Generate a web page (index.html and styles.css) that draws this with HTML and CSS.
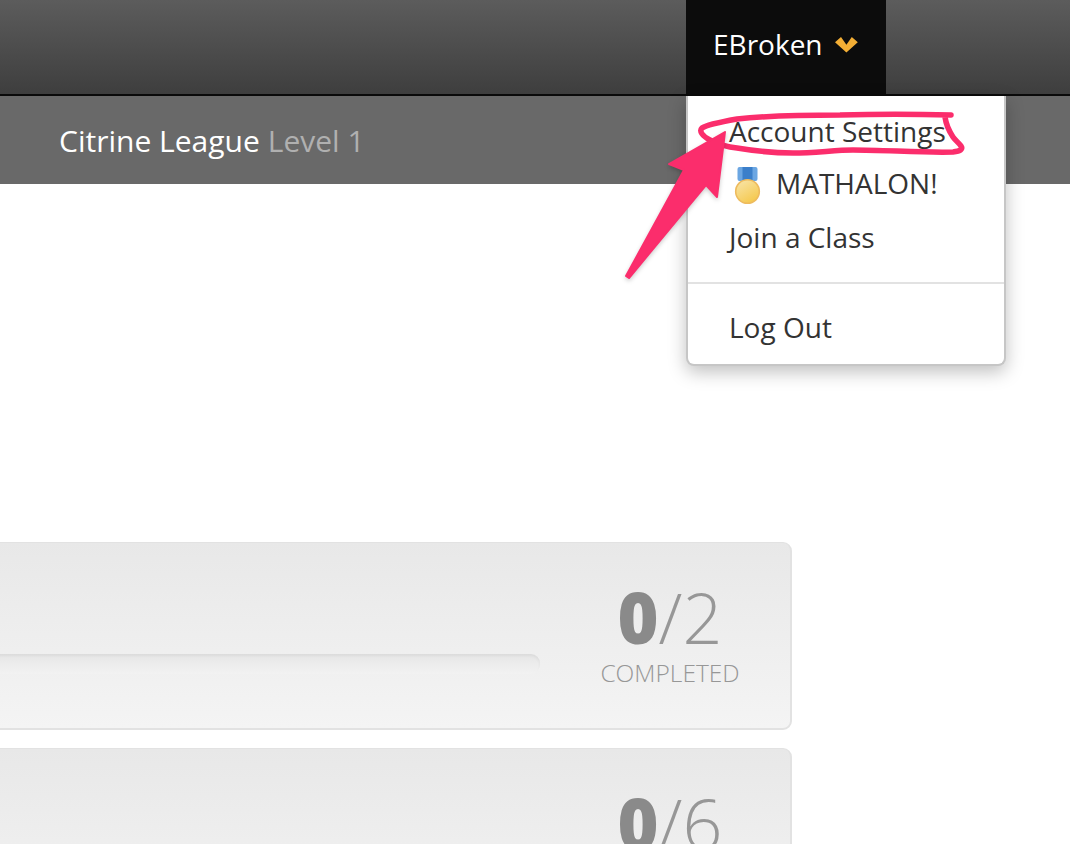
FILE: index.html
```html
<!DOCTYPE html>
<html lang="en">
<head>
    <meta charset="UTF-8">
    <meta name="viewport" content="width=device-width, initial-scale=1.0">
    <title>Dashboard</title>
    <link rel="stylesheet" href="styles.css">
</head>
<body>
    <header class="topbar">
        <div class="user-menu">
            <span class="user-name">EBroken</span>
            <svg class="chevron" width="23" height="16" viewBox="0 0 23 16">
                <path d="M0 5.3 L6 0 L11.4 7.7 L16.8 0 L22.8 5.3 L11.4 15.6 Z" fill="#f3ae35"/>
            </svg>
        </div>
    </header>
    <div class="subbar">
        <span class="league">Citrine League</span>
        <span class="level">Level 1</span>
    </div>

    <div class="dropdown">
        <a class="dropdown-item item-account">Account Settings</a>
        <a class="dropdown-item item-mathalon">
            <svg class="medal" width="28" height="38" viewBox="0 0 28 38">
                <defs>
                    <linearGradient id="gold" x1="0" y1="0" x2="0.6" y2="1">
                        <stop offset="0" stop-color="#f8e6ae"/>
                        <stop offset="1" stop-color="#f5c94f"/>
                    </linearGradient>
                </defs>
                <rect x="3.5" y="0" width="20" height="14" rx="2" fill="#6ba6e2"/>
                <rect x="8.5" y="0" width="10" height="14" fill="#3b7fca"/>
                <circle cx="13.5" cy="24.5" r="11.8" fill="url(#gold)" stroke="#eebb5e" stroke-width="1.6"/>
            </svg>
            <span>MATHALON!</span>
        </a>
        <a class="dropdown-item item-join">Join a Class</a>
        <hr class="dropdown-divider">
        <a class="dropdown-item item-logout">Log Out</a>
    </div>

    <main class="content">
        <section class="card">
            <div class="progress-track"></div>
            <div class="score">
                <div class="score-nums"><b>0</b>/2</div>
                <div class="score-label">COMPLETED</div>
            </div>
        </section>
        <section class="card">
            <div class="progress-track"></div>
            <div class="score">
                <div class="score-nums"><b>0</b>/6</div>
            </div>
        </section>
    </main>

    <!-- hand drawn markup on top of the page -->
    <svg class="markup" width="1070" height="844" viewBox="0 0 1070 844">
        <path class="scribble" d="M951 115 C915 114 875 114 840 115 C800 115 765 116 737 119 C720 122 706 125 702 128 C699 131 702 136 710 140 C720 145 728 147 737 148 C755 151 775 153 793 153 C815 153 835 150 853 150 C885 150 925 153 953 152 C961 151 963 149 961 146 C958 142 955 140 953 137 C949 131 946 124 945 117"/>
        <path class="arrow" d="M725 132 L717 197 L706 185 L629 278 L626 276 L684 170 L669 164 Z"/>
    </svg>
</body>
</html>
```

FILE: styles.css
```css
body {
    font-family: "Open Sans", sans-serif;
    margin: 0;
    padding: 0;
    background-color: #fff;
    height: 844px;
    overflow: hidden;
    position: relative;
}
.topbar {
    display: flex;
    justify-content: flex-end;
    height: 94px;
    padding-right: 184px;
    background: linear-gradient(#5c5c5c, #3e3e3e);
    border-bottom: 2px solid #0a0a0a;
}
.user-menu {
    display: flex;
    align-items: center;
    gap: 12px;
    width: 200px;
    box-sizing: border-box;
    padding: 0 0 6px 27px;
    background-color: #0c0c0c;
}
.user-name {
    font-size: 28px;
    color: #fff;
}
.chevron {
    margin-top: 1px;
}
.subbar {
    display: flex;
    align-items: center;
    gap: 8px;
    height: 88px;
    padding-left: 59px;
    font-size: 30px;
    background-color: #696969;
}
.league {
    color: #fff;
}
.level {
    color: #b0b0b0;
}
.dropdown {
    position: absolute;
    top: 96px;
    left: 686px;
    width: 316px;
    height: 268px;
    background: #fff;
    border: 2px solid #c6c6c6;
    border-top: none;
    border-radius: 0 0 8px 8px;
    box-shadow: 0 6px 18px rgba(0, 0, 0, 0.25);
    font-size: 28px;
    color: #333;
}
.dropdown-item {
    display: flex;
    align-items: center;
    padding-left: 41px;
}
.item-account {
    height: 70px;
}
.item-mathalon {
    height: 34px;
    gap: 14px;
    padding-left: 46px;
}
.item-join {
    height: 74px;
}
.medal {
    flex: none;
    margin-top: 5px;
}
.dropdown-divider {
    margin: 8px 0 0;
    border: none;
    border-top: 2px solid #e2e2e2;
}
.item-logout {
    height: 86px;
}
.content {
    display: flex;
    flex-direction: column;
    gap: 18px;
    padding-top: 358px;
    margin-left: -10px;
    margin-right: 278px;
}
.card {
    display: flex;
    flex: none;
    justify-content: flex-end;
    height: 185px;
    background: linear-gradient(#e8e8e8, #f4f4f4);
    border: 1px solid #e2e2e2;
    border-bottom-width: 2px;
    border-right-width: 2px;
    border-radius: 9px;
}
.progress-track {
    flex: 1;
    height: 20px;
    margin-top: 111px;
    background: linear-gradient(#e6e6e6, #f2f2f2);
    box-shadow: inset 0 2px 3px rgba(0, 0, 0, 0.05);
    border-radius: 0 9px 9px 0;
}
.score {
    width: 240px;
    margin-left: 10px;
    text-align: center;
    color: #979797;
    padding-top: 34px;
}
.score-nums {
    font-size: 70px;
    font-weight: 300;
    line-height: 80px;
}
.score-nums b {
    font-weight: 800;
    color: #8a8a8a;
}
.score-label {
    font-size: 24.5px;
    font-weight: 300;
    line-height: 30px;
    margin-top: 1px;
}
.markup {
    position: absolute;
    top: 0;
    left: 0;
    pointer-events: none;
}
.scribble {
    fill: none;
    stroke: #fb2d6c;
    stroke-width: 5.5;
    stroke-linecap: round;
    stroke-linejoin: round;
}
.arrow {
    fill: #fb2d6c;
    stroke: #fb2d6c;
    stroke-width: 2;
    stroke-linejoin: round;
    filter: drop-shadow(0 2px 2px rgba(0, 0, 0, 0.2));
}
```
